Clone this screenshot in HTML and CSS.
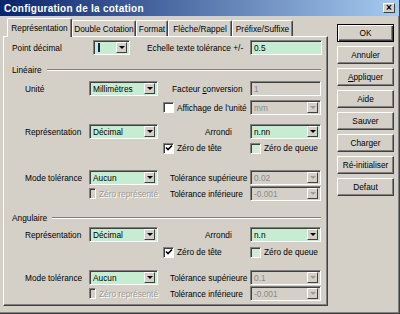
FILE: index.html
```html
<!DOCTYPE html>
<html lang="fr">
<head>
    <meta charset="UTF-8">
    <title>Configuration de la cotation</title>
    <link rel="stylesheet" href="styles.css">
</head>
<body>
    <div class="window">
        <div class="titlebar">
            <span class="title">Configuration de la cotation</span>
            <span class="close">&#215;</span>
        </div>

        <div class="body">
            <div class="tabs-area">
                <div class="tabs">
                    <div class="tab active t1">Représentation</div>
                    <div class="tab t2">Double Cotation</div>
                    <div class="tab t3">Format</div>
                    <div class="tab t4">Flèche/Rappel</div>
                    <div class="tab t5">Préfixe/Suffixe</div>
                </div>

                <div class="panel">
                    <div class="row-top">
                        <span class="top-label">Point décimal</span>
                        <div class="combo small"><span class="sel"></span><span class="arrow"></span></div>
                        <span class="top-label2">Echelle texte tolérance +/-</span>
                        <div class="field">0.5</div>
                    </div>

                    <div class="group g1"><span>Linéaire</span><span class="rule"></span></div>

                    <div class="row mt5">
                        <span class="label c1">Unité</span>
                        <div class="combo c2"><span>Millimètres</span><span class="arrow"></span></div>
                        <span class="rlabel c4 p9">Facteur <u>c</u>onversion</span>
                        <div class="field off c5">1</div>
                    </div>
                    <div class="row mt4">
                        <label class="check c4"><span class="box"></span>Affichage de l'unité</label>
                        <div class="combo off c5"><span>mm</span><span class="arrow"></span></div>
                    </div>

                    <div class="row mt9">
                        <span class="label c1">Représentation</span>
                        <div class="combo c2"><span>Décimal</span><span class="arrow"></span></div>
                        <span class="rlabel c4 p42">Arrondi</span>
                        <div class="combo c5"><span>n.nn</span><span class="arrow"></span></div>
                    </div>
                    <div class="row short mt2">
                        <label class="check c4"><span class="box on"><svg width="8" height="8" viewBox="0 0 8 8"><path d="M1 3.5 L3 5.5 L7 1.5" fill="none" stroke="#000" stroke-width="1.6"/></svg></span>Zéro de tête</label>
                        <label class="check c5"><span class="box tint"></span>Zéro de queue</label>
                    </div>

                    <div class="row mt15">
                        <span class="label c1">Mode tolérance</span>
                        <div class="combo c2"><span>Aucun</span><span class="arrow"></span></div>
                        <span class="rlabel c4 p7">Tolérance supérieure</span>
                        <div class="combo off c5"><span>0.02</span><span class="arrow"></span></div>
                    </div>
                    <div class="row mt1">
                        <label class="check dis c2"><span class="box"></span>Zéro représenté</label>
                        <span class="rlabel c4 p7">Tolérance inférieure</span>
                        <div class="combo off c5"><span>-0.001</span><span class="arrow"></span></div>
                    </div>

                    <div class="group g2"><span>Angulaire</span><span class="rule"></span></div>

                    <div class="row mt3">
                        <span class="label c1">Représentation</span>
                        <div class="combo c2"><span>Décimal</span><span class="arrow"></span></div>
                        <span class="rlabel c4 p42">Arrondi</span>
                        <div class="combo c5"><span>n.n</span><span class="arrow"></span></div>
                    </div>
                    <div class="row short mt3">
                        <label class="check c4"><span class="box on"><svg width="8" height="8" viewBox="0 0 8 8"><path d="M1 3.5 L3 5.5 L7 1.5" fill="none" stroke="#000" stroke-width="1.6"/></svg></span>Zéro de tête</label>
                        <label class="check c5"><span class="box tint"></span>Zéro de queue</label>
                    </div>

                    <div class="row mt11">
                        <span class="label c1">Mode tolérance</span>
                        <div class="combo c2"><span>Aucun</span><span class="arrow"></span></div>
                        <span class="rlabel c4 p7">Tolérance supérieure</span>
                        <div class="combo off c5"><span>0.1</span><span class="arrow"></span></div>
                    </div>
                    <div class="row mt1">
                        <label class="check dis c2"><span class="box"></span>Zéro représenté</label>
                        <span class="rlabel c4 p7">Tolérance inférieure</span>
                        <div class="combo off c5"><span>-0.001</span><span class="arrow"></span></div>
                    </div>
                </div>
            </div>

            <div class="buttons">
                <button class="btn default">OK</button>
                <button class="btn">Annuler</button>
                <button class="btn"><u>A</u>ppliquer</button>
                <button class="btn">Aide</button>
                <button class="btn">Sauver</button>
                <button class="btn">Charger</button>
                <button class="btn">Ré-initialiser</button>
                <button class="btn">Defaut</button>
            </div>
        </div>
    </div>
</body>
</html>
```

FILE: styles.css
```css
body, html {
    margin: 0;
    padding: 0;
    font-family: "Liberation Sans", Arial, sans-serif;
    font-size: 8.3px;
    color: #000;
}

.window {
    width: 400px;
    height: 314px;
    box-sizing: border-box;
    background-color: #d4d0c8;
    border-right: 1px solid #404040;
    border-bottom: 1px solid #404040;
    box-shadow: inset -1px -1px #808080;
    overflow: hidden;
}

/* title bar */
.titlebar {
    height: 16px;
    display: flex;
    align-items: center;
    justify-content: space-between;
    padding: 0 4px 0 4px;
    background: linear-gradient(to right, #0a246a, #a6caf0);
}

.title {
    color: #fff;
    font-weight: bold;
    font-size: 10px;
    letter-spacing: 0.25px;
}

.close {
    width: 12px;
    height: 10px;
    box-sizing: border-box;
    background-color: #d4d0c8;
    border: 1px solid;
    border-color: #fff #404040 #404040 #fff;
    font-size: 10px;
    font-weight: bold;
    line-height: 7px;
    text-align: center;
}

.body {
    display: flex;
    padding: 2px 0 0 3px;
}

.tabs-area {
    width: 325px;
}

/* tabs */
.tabs {
    display: flex;
    align-items: flex-end;
    height: 18px;
    padding-left: 4px;
}

.tab {
    height: 16px;
    box-sizing: border-box;
    border: 1px solid;
    border-bottom: none;
    border-color: #fff #404040 #fff #fff;
    box-shadow: inset -1px 0 #808080;
    border-radius: 2px 2px 0 0;
    display: flex;
    align-items: center;
    justify-content: center;
    white-space: nowrap;
}

.tab.active {
    height: 19px;
    margin-bottom: -1px;
    position: relative;
    z-index: 1;
    background-color: #d4d0c8;
    padding-bottom: 1px;
}

.t1 { width: 65px; }
.t2 { width: 64px; }
.t3 { width: 32px; }
.t4 { width: 64px; }
.t5 { width: 61px; }

.panel {
    height: 270px;
    box-sizing: border-box;
    border: 1px solid;
    border-color: #fff #404040 #404040 #fff;
    box-shadow: inset -1px -1px #808080;
    padding-top: 3px;
}

/* rows */
.row-top {
    display: flex;
    align-items: center;
    height: 15px;
    padding-left: 8px;
}

.top-label {
    width: 81px;
}

.top-label2 {
    width: 103px;
    margin-left: 17px;
    white-space: nowrap;
}

.combo.small {
    width: 37px;
}

.sel {
    display: inline-block;
    width: 2px;
    height: 9px;
    margin-left: 1px;
    background-color: #0a246a;
}

.row-top .field {
    width: 72px;
}

.group {
    display: flex;
    align-items: center;
    height: 12px;
    padding: 0 6px 0 8px;
}

.g1 { margin-top: 9px; }
.g2 { margin-top: 11px; }

.rule {
    flex: 1;
    margin-left: 5px;
    border-top: 1px solid #808080;
    border-bottom: 1px solid #fff;
}

.row {
    display: grid;
    grid-template-columns: 85px 69px 5px 87px 71px;
    align-items: center;
    height: 15px;
}

.row.short {
    height: 14px;
}

.mt1 { margin-top: 1px; }
.mt2 { margin-top: 2px; }
.mt3 { margin-top: 3px; }
.mt4 { margin-top: 4px; }
.mt5 { margin-top: 5px; }
.mt9 { margin-top: 9px; }
.mt11 { margin-top: 11px; }
.mt15 { margin-top: 15px; }

.c1 { grid-column: 1; }
.c2 { grid-column: 2; }
.c4 { grid-column: 4; }
.c5 { grid-column: 5; }

.label {
    padding-left: 21px;
    white-space: nowrap;
}

.rlabel {
    white-space: nowrap;
}

.p7 { padding-left: 7px; }
.p9 { padding-left: 9px; }
.p42 { padding-left: 42px; }

/* inputs */
.combo,
.field {
    height: 15px;
    box-sizing: border-box;
    display: flex;
    align-items: center;
    padding: 2px 2px 2px 3px;
    background-color: #c6ecd1;
    border: 1px solid;
    border-color: #808080 #fff #fff #808080;
    box-shadow: inset 1px 1px #404040;
    white-space: nowrap;
}

.combo.off,
.field.off {
    background-color: #d4d0c8;
    color: #8a8a8a;
}

.arrow {
    margin-left: auto;
    width: 11px;
    height: 11px;
    box-sizing: border-box;
    background-color: #d4d0c8;
    border: 1px solid;
    border-color: #fff #404040 #404040 #fff;
    display: flex;
    align-items: center;
    justify-content: center;
}

.arrow::after {
    content: "";
    border-left: 3px solid transparent;
    border-right: 3px solid transparent;
    border-top: 3px solid #000;
}

.combo.off .arrow::after {
    border-top-color: #9a9a9a;
}

.check {
    display: flex;
    align-items: center;
    gap: 3px;
    white-space: nowrap;
}

.box {
    width: 11px;
    height: 11px;
    box-sizing: border-box;
    background-color: #fff;
    border: 1px solid;
    border-color: #808080 #fff #fff #808080;
    box-shadow: inset 1px 1px #404040;
    display: flex;
    align-items: center;
    justify-content: center;
}

.box.tint {
    background-color: #d3ead6;
}

.check.dis {
    color: #9a9a9a;
    text-shadow: 1px 1px #fff;
}

.check.dis .box {
    background-color: #d4d0c8;
}

/* buttons */
.buttons {
    display: flex;
    flex-direction: column;
    gap: 4px;
    margin-left: 9px;
    padding-top: 6px;
}

.btn {
    width: 57px;
    height: 18px;
    padding: 0;
    box-sizing: border-box;
    font-family: inherit;
    font-size: 8.3px;
    color: #000;
    background-color: #d4d0c8;
    border: 1px solid;
    border-color: #fff #404040 #404040 #fff;
    box-shadow: inset -1px -1px #808080;
}

.btn.default {
    border-color: #000;
    box-shadow: inset 1px 1px #fff, inset -1px -1px #404040, inset -2px -2px #808080;
}
```
